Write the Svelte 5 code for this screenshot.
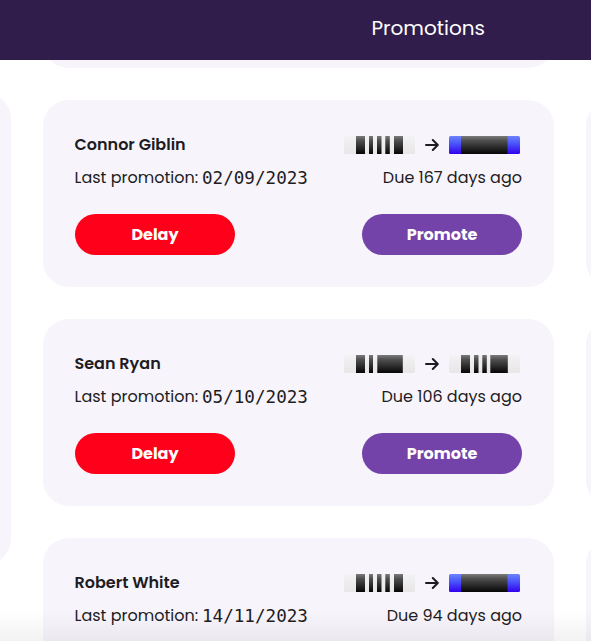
<script lang="ts">
	type Insignia = { kind: 'cadet' | 'officer'; bars: number[][] };

	const fiveBars: Insignia = { kind: 'cadet', bars: [[12, 9], [25, 4], [33, 4.5], [41.3, 4.5], [50, 9]] };
	const wideLeft: Insignia = { kind: 'cadet', bars: [[12, 9], [25, 4], [33.3, 25.5]] };
	const wideRight: Insignia = { kind: 'cadet', bars: [[12, 9], [25, 4.5], [33.3, 4.5], [41.3, 17.5]] };
	const officer: Insignia = { kind: 'officer', bars: [[12, 46.5]] };

	const members = [
		{ name: 'Connor Giblin', date: '02/09/2023', due: 'Due 167 days ago', from: fiveBars, to: officer, open: true },
		{ name: 'Sean Ryan', date: '05/10/2023', due: 'Due 106 days ago', from: wideLeft, to: wideRight, open: true },
		{ name: 'Robert White', date: '14/11/2023', due: 'Due 94 days ago', from: fiveBars, to: officer, open: false }
	];
</script>

{#snippet rank(insignia: Insignia)}
	<svg class="rank" viewBox="0 0 71 18">
		<rect width="71" height="18" rx="1.5" fill="url(#{insignia.kind})" />
		{#each insignia.bars as [x, width]}
			<rect {x} {width} height="18" fill="url(#bar)" />
		{/each}
	</svg>
{/snippet}

<svg class="defs">
	<defs>
		<linearGradient id="cadet" x1="0" y1="0" x2="0" y2="1">
			<stop offset="0" stop-color="#f3f2f4" />
			<stop offset="1" stop-color="#e8e6e7" />
		</linearGradient>
		<linearGradient id="officer" x1="0" y1="0" x2="0" y2="1">
			<stop offset="0" stop-color="#6d83fb" />
			<stop offset="0.45" stop-color="#4751fa" />
			<stop offset="1" stop-color="#3300ee" />
		</linearGradient>
		<linearGradient id="bar" x1="0" y1="0" x2="0" y2="1">
			<stop offset="0" stop-color="#7b7b7b" />
			<stop offset="0.25" stop-color="#505050" />
			<stop offset="1" stop-color="#050505" />
		</linearGradient>
	</defs>
</svg>

<div class="page">
	<header>
		<h1>Promotions</h1>
	</header>

	<main>
		<div class="column side">
			<div class="card summary"></div>
		</div>

		<div class="column">
			<div class="card previous"></div>
			{#each members as member}
				<article class="card">
					<div class="row">
						<h2>{member.name}</h2>
						<div class="ranks">
							{@render rank(member.from)}
							<svg class="arrow" viewBox="0 0 14 14">
								<path d="M1 7H12.5M7.8 2L12.8 7L7.8 12" />
							</svg>
							{@render rank(member.to)}
						</div>
					</div>
					<div class="row">
						<p><span class="label">Last promotion:</span><time>{member.date}</time></p>
						<p>{member.due}</p>
					</div>
					{#if member.open}
						<div class="actions">
							<button class="delay">Delay</button>
							<button class="promote">Promote</button>
						</div>
					{/if}
				</article>
			{/each}
		</div>

		<div class="column">
			<div class="card previous"></div>
			{#each members as _}
				<div class="card"></div>
			{/each}
		</div>
	</main>
	<div class="fade"></div>
</div>

<style>
	.page {
		position: relative;
		height: 641px;
		overflow: hidden;
		background: #fff;
		color: #1e1c22;
		font-family: Poppins, Inter, sans-serif;
		font-size: 16px;
	}

	.defs {
		position: absolute;
		width: 0;
		height: 0;
	}

	header {
		position: relative;
		z-index: 1;
		display: flex;
		align-items: center;
		height: 56px;
		padding-bottom: 4px;
		padding-left: 371.5px;
		background: #311d4b;
		color: #fff;
	}

	h1 {
		margin: 0;
		font-size: 20px;
		font-weight: 400;
	}

	main {
		display: grid;
		grid-template-columns: repeat(3, 511px);
		column-gap: 32px;
		margin-left: -500px;
	}

	.column {
		display: flex;
		flex-direction: column;
		gap: 32px;
	}

	.side {
		padding-top: 33px;
	}

	.card {
		box-sizing: border-box;
		height: 187px;
		padding: 28px 32px 32px;
		border-radius: 26px;
		background: #f7f4fc;
	}

	.summary {
		height: 472px;
	}

	.previous {
		margin-top: -179px;
	}

	.row {
		display: flex;
		align-items: center;
		justify-content: space-between;
		height: 33px;
		margin-left: -0.5px;
		white-space: nowrap;
	}

	h2 {
		margin: 0;
		font-size: 16px;
		font-weight: 600;
	}

	p {
		display: flex;
		align-items: center;
		margin: 0;
	}

	.label {
		width: 127.5px;
	}

	time {
		font-family: "SF Mono", "DejaVu Sans Mono", monospace;
		font-size: 17.6px;
	}

	.ranks {
		display: flex;
		align-items: center;
		gap: 10px;
		margin-right: 2px;
	}

	.rank {
		width: 71px;
		height: 18px;
	}

	.arrow {
		width: 14px;
		height: 14px;
		fill: none;
		stroke: #1e1c22;
		stroke-width: 2;
		stroke-linecap: round;
		stroke-linejoin: round;
	}

	.actions {
		display: flex;
		justify-content: space-between;
		margin-top: 20px;
	}

	button {
		width: 160px;
		height: 41px;
		padding: 0;
		border: 0;
		border-radius: 21px;
		color: #fff;
		font: inherit;
		font-weight: 700;
	}

	.delay {
		background: #ff001a;
	}

	.promote {
		background: #7443a9;
	}

	.fade {
		position: absolute;
		inset: auto 0 0;
		height: 30px;
		background: linear-gradient(rgb(0 0 0 / 0), rgb(0 0 0 / 0.05));
	}
</style>
